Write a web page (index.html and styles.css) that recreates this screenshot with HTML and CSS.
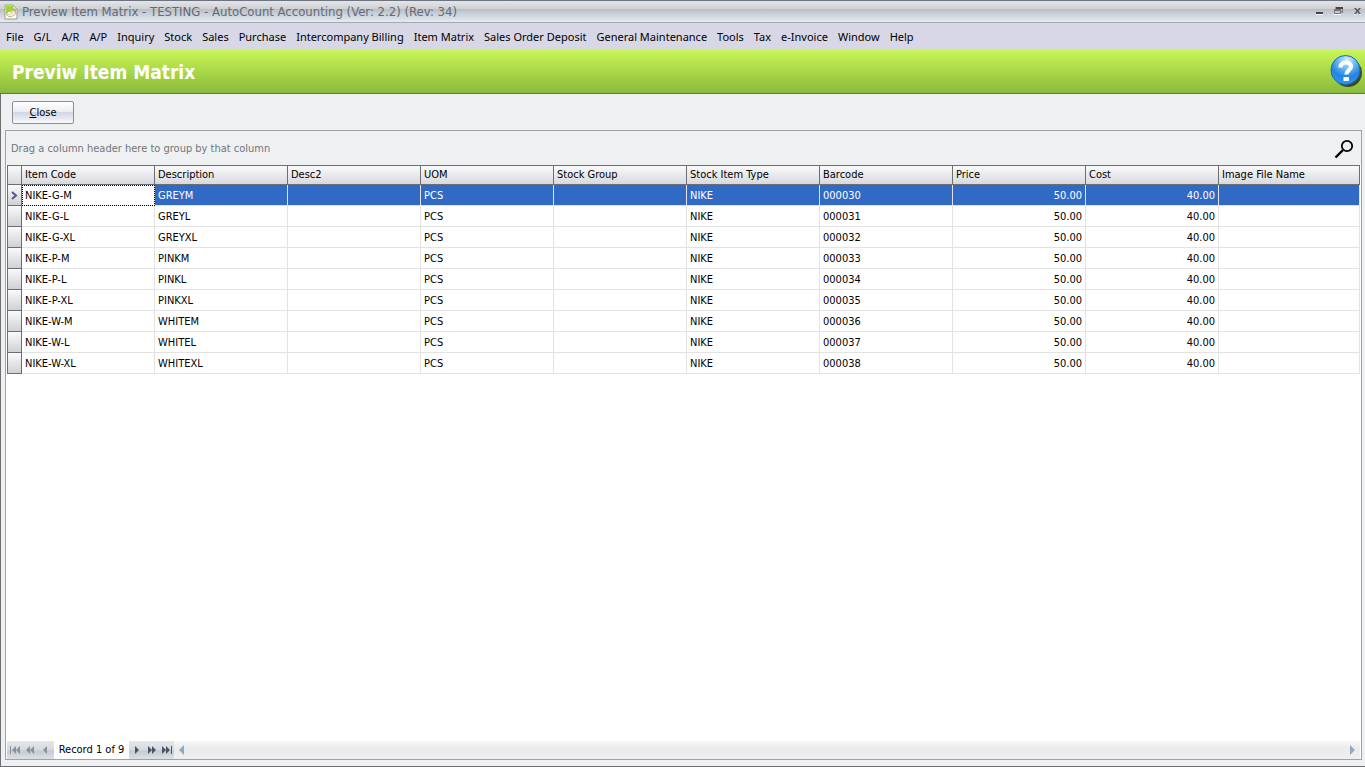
FILE: index.html
```html
<!DOCTYPE html>
<html lang="en">
<head>
  <meta charset="UTF-8">
  <meta name="viewport" content="width=device-width, initial-scale=1.0">
  <title>Preview Item Matrix - TESTING - AutoCount Accounting</title>
  <link rel="stylesheet" href="styles.css">
</head>
<body>
  <header class="titlebar">
    <svg class="app-icon" width="14" height="16" viewBox="0 0 14 16">
      <path d="M1 1h8l4 4v10H1z" fill="#fff" stroke="#9a9b86"/>
      <path d="M2 2h7l3 3v5L9 6 2 10z" fill="#a4d233"/>
      <path d="M9 1v4h4z" fill="#eef6cf" stroke="#a0a67a" stroke-width=".6"/>
      <path d="M2 10l3-3 2 1 3-2 2 3-3 3-4 1z" fill="#f8f6ea" stroke="#b3a77f" stroke-width=".8"/>
      <path d="M3 10l2 1 5-3" fill="none" stroke="#d3c9a7" stroke-width=".8"/>
    </svg>
    <span class="window-title">Preview Item Matrix - TESTING - AutoCount Accounting (Ver: 2.2) (Rev: 34)</span>
    <div class="window-buttons">
      <button aria-label="Minimize"><svg width="9" height="9" viewBox="0 0 9 9"><path d="M1 5h7v2H1z" fill="#444"/><path d="M1 7h7v1H1z" fill="#fff"/></svg></button>
      <button aria-label="Restore"><svg width="9" height="9" viewBox="0 0 9 9"><path d="M2 2V0h7v5H7" fill="none" stroke="#555"/><path d="M2 0h7v2H2z" fill="#444"/><path d="M0 2h7v2H0z" fill="#777"/><path d="M.5 2.500h6v4h-6z" fill="none" stroke="#777"/><path d="M0 7h7v1H0z" fill="#fff"/></svg></button>
      <button aria-label="Close window"><svg width="9" height="9" viewBox="0 0 9 9"><path d="M1 1h2l1.500 2L6 1h2L5.500 4 8 7H6L4.500 5 3 7H1l2.500-3z" fill="#555"/><path d="M1 7h2v1H1zM6 7h2v1H6z" fill="#fff"/></svg></button>
    </div>
  </header>

  <nav class="menu">
    <a href="#">File</a>
    <a href="#">G/L</a>
    <a href="#">A/R</a>
    <a href="#">A/P</a>
    <a href="#">Inquiry</a>
    <a href="#">Stock</a>
    <a href="#">Sales</a>
    <a href="#">Purchase</a>
    <a href="#">Intercompany Billing</a>
    <a href="#">Item Matrix</a>
    <a href="#">Sales Order Deposit</a>
    <a href="#">General Maintenance</a>
    <a href="#">Tools</a>
    <a href="#">Tax</a>
    <a href="#">e-Invoice</a>
    <a href="#">Window</a>
    <a href="#">Help</a>
  </nav>

  <div class="banner">
    <h1>Previw Item Matrix</h1>
    <button class="help" aria-label="Help">
      <svg width="33" height="34" viewBox="0 0 33 34">
        <defs>
          <radialGradient id="ball" cx="55%" cy="15%" r="85%">
            <stop offset="0" stop-color="#d4f1fa"/>
            <stop offset=".4" stop-color="#5fb4ee"/>
            <stop offset=".7" stop-color="#2683e0"/>
            <stop offset="1" stop-color="#22a0ec"/>
          </radialGradient>
        </defs>
        <circle cx="18" cy="18" r="14" fill="#3c4a2c"/>
        <circle cx="15.500" cy="15" r="14.500" fill="url(#ball)" stroke="#1c68c8"/>
        <path d="M10.500 12.500c0-6.500 10.500-6.500 10.500-1 0 4-4.700 3.800-4.700 8" fill="none" stroke="#fff" stroke-width="4.200"/>
        <path d="M13.500 22h5.500v4h-5.500z" fill="#fff"/>
      </svg>
    </button>
  </div>

  <main class="content">
    <div class="toolbar">
      <button class="btn-close"><u>C</u>lose</button>
    </div>

    <section class="grid">
      <div class="group-panel">
        <span>Drag a column header here to group by that column</span>
        <button class="find" aria-label="Find">
          <svg width="20" height="20" viewBox="0 0 20 20" fill="none" stroke="#000">
            <circle cx="13" cy="7" r="5.200" stroke-width="1.800"/>
            <path d="M9 11l-7.500 7.500" stroke-width="2.400"/>
          </svg>
        </button>
      </div>

      <div class="rows">
        <table>
          <colgroup>
            <col class="col-mark">
            <col span="9" class="col-data">
            <col>
          </colgroup>
          <thead>
            <tr><th></th><th>Item Code</th><th>Description</th><th>Desc2</th><th>UOM</th><th>Stock Group</th><th>Stock Item Type</th><th>Barcode</th><th>Price</th><th>Cost</th><th>Image File Name</th></tr>
          </thead>
          <tbody>
            <tr class="selected"><td class="mark"><svg width="7" height="9" viewBox="0 0 7 9"><path d="M1 1l4 3.500L1 8" fill="none" stroke="#5c5488" stroke-width="2"/></svg></td><td class="focus">NIKE-G-M</td><td>GREYM</td><td></td><td>PCS</td><td></td><td>NIKE</td><td>000030</td><td class="num">50.00</td><td class="num">40.00</td><td></td></tr>
            <tr><td class="mark"></td><td>NIKE-G-L</td><td>GREYL</td><td></td><td>PCS</td><td></td><td>NIKE</td><td>000031</td><td class="num">50.00</td><td class="num">40.00</td><td></td></tr>
            <tr><td class="mark"></td><td>NIKE-G-XL</td><td>GREYXL</td><td></td><td>PCS</td><td></td><td>NIKE</td><td>000032</td><td class="num">50.00</td><td class="num">40.00</td><td></td></tr>
            <tr><td class="mark"></td><td>NIKE-P-M</td><td>PINKM</td><td></td><td>PCS</td><td></td><td>NIKE</td><td>000033</td><td class="num">50.00</td><td class="num">40.00</td><td></td></tr>
            <tr><td class="mark"></td><td>NIKE-P-L</td><td>PINKL</td><td></td><td>PCS</td><td></td><td>NIKE</td><td>000034</td><td class="num">50.00</td><td class="num">40.00</td><td></td></tr>
            <tr><td class="mark"></td><td>NIKE-P-XL</td><td>PINKXL</td><td></td><td>PCS</td><td></td><td>NIKE</td><td>000035</td><td class="num">50.00</td><td class="num">40.00</td><td></td></tr>
            <tr><td class="mark"></td><td>NIKE-W-M</td><td>WHITEM</td><td></td><td>PCS</td><td></td><td>NIKE</td><td>000036</td><td class="num">50.00</td><td class="num">40.00</td><td></td></tr>
            <tr><td class="mark"></td><td>NIKE-W-L</td><td>WHITEL</td><td></td><td>PCS</td><td></td><td>NIKE</td><td>000037</td><td class="num">50.00</td><td class="num">40.00</td><td></td></tr>
            <tr><td class="mark"></td><td>NIKE-W-XL</td><td>WHITEXL</td><td></td><td>PCS</td><td></td><td>NIKE</td><td>000038</td><td class="num">50.00</td><td class="num">40.00</td><td></td></tr>
          </tbody>
        </table>
      </div>

      <footer class="navigator">
        <div class="nav-group off">
          <button aria-label="First"><svg width="12" height="8" viewBox="0 0 12 8"><path d="M1 0h1v8H1zM7 0v8L3 4zM11 0v8L7 4z"/></svg></button>
          <button aria-label="Previous page"><svg width="12" height="8" viewBox="0 0 12 8"><path d="M6 0v8L2 4zM10 0v8L6 4z"/></svg></button>
          <button aria-label="Previous"><svg width="12" height="8" viewBox="0 0 12 8"><path d="M8 0v8L4 4z"/></svg></button>
        </div>
        <span class="record">Record 1 of 9</span>
        <div class="nav-group">
          <button aria-label="Next"><svg width="12" height="8" viewBox="0 0 12 8"><path d="M4 0v8l4-4z"/></svg></button>
          <button aria-label="Next page"><svg width="12" height="8" viewBox="0 0 12 8"><path d="M2 0v8l4-4zM6 0v8l4-4z"/></svg></button>
          <button aria-label="Last"><svg width="12" height="8" viewBox="0 0 12 8"><path d="M1 0v8l4-4zM5 0v8l4-4zM10 0h1v8h-1z"/></svg></button>
        </div>
        <div class="scrollbar">
          <button aria-label="Scroll left"><svg width="6" height="10" viewBox="0 0 6 10"><path d="M5 0v10L0 5z"/></svg></button>
          <button aria-label="Scroll right"><svg width="6" height="10" viewBox="0 0 6 10"><path d="M1 0v10l5-5z"/></svg></button>
        </div>
      </footer>
    </section>
  </main>
</body>
</html>
```
FILE: styles.css
```css
* { box-sizing: border-box; }
body {
  margin: 0;
  height: 100vh;
  display: flex;
  flex-direction: column;
  background: #eff0f2;
  color: #000;
  font: 11px/14px Tahoma, "DejaVu Sans Condensed", sans-serif;
}
button { border: 0; padding: 0; background: none; font: inherit; color: inherit; }
svg { display: block; }

.titlebar {
  display: flex;
  align-items: center;
  height: 23px;
  padding: 0 3px 0 4px;
  border-top: 1px solid #6d7481;
  border-bottom: 1px solid #a3a8b5;
  background: linear-gradient(#e4e5e8, #cfd1d3 36%, #b9bfc8 40%, #c9cfd8 60%, #e6eaf3);
}
.window-title { margin-left: 4px; font-size: 13px; color: #636a75; }
.window-buttons { display: flex; gap: 10px; margin-left: auto; }

.menu {
  display: flex;
  align-items: center;
  gap: 10px;
  height: 27px;
  padding-left: 6px;
  background: #d8d7e5;
  font: 11px/16px "Segoe UI", "Noto Sans", sans-serif;
}
.menu a { color: #000; text-decoration: none; white-space: nowrap; }

.banner {
  display: flex;
  align-items: center;
  justify-content: space-between;
  height: 44px;
  padding: 0 2px 0 12px;
  border-bottom: 1px solid #66706a;
  background: linear-gradient(#c8f556, #8aba3b);
}
.banner h1 { margin: 0; font: bold 19px/24px Tahoma, "DejaVu Sans Condensed", sans-serif; color: #fff; }

.content {
  flex: 1;
  display: flex;
  flex-direction: column;
  padding: 0 3px 6px 4px;
  border-left: 1px solid #6d6e72;
  border-bottom: 1px solid #6d6e72;
}
.toolbar { height: 36px; padding: 7px; }
.btn-close {
  width: 62px;
  height: 23px;
  padding-top: 1px;
  border: 1px solid #8b8f97;
  border-radius: 2px;
  background: linear-gradient(#fff, #eceef3 45%, #d3d7e3 50%, #e3e6ef 75%, #f8f9fd);
}

.grid {
  flex: 1;
  display: flex;
  flex-direction: column;
  border: 1px solid #a1a2a6;
}
.group-panel {
  display: flex;
  align-items: center;
  justify-content: space-between;
  height: 34px;
  padding: 2px 7px 0 5px;
  color: #73757b;
}
.rows { flex: 1; padding: 0 1px; background: #fff; }

table { width: 100%; table-layout: fixed; border-collapse: separate; border-spacing: 0; }
.col-mark { width: 15px; }
.col-data { width: 133px; }
th, td { padding: 0 3px; text-align: left; font-weight: normal; white-space: nowrap; }
th {
  height: 20px;
  border: solid #6d6e75;
  border-width: 1px 1px 1px 0;
  background: linear-gradient(#fafafb, #d8d9dd);
}
th:first-child { border-left-width: 1px; }
td { height: 21px; padding-top: 2px; border: solid #e3e3e3; border-width: 0 1px 1px 0; }
td.num { text-align: right; }
td.mark { padding: 0 3px; border-color: #6d6e75; border-left-width: 1px; background: linear-gradient(#fafafb, #d0d1d6); }
.selected td:not(.mark) { background: #316ac5; color: #fff; }
.selected td.focus { background: #fff; color: #000; outline: 1px dotted #000; outline-offset: -1px; }

.navigator { display: flex; height: 18px; padding: 0 1px; background: #fff; }
.nav-group {
  display: flex;
  align-items: center;
  gap: 3px;
  padding: 0 1px 0 2px;
  background: linear-gradient(#e6e7ea, #d5d9de 50%, #c4cbd2 55%, #dde1e6);
  fill: #465662;
}
.nav-group.off { padding-right: 3px; fill: #88929b; }
.record { width: 75px; line-height: 18px; text-align: center; white-space: nowrap; }
.scrollbar {
  flex: 1;
  display: flex;
  align-items: center;
  justify-content: space-between;
  padding: 0 5px;
  background: linear-gradient(#f8f8f8, #ebebeb 40%, #efefef);
  fill: #8fa9c0;
}
```
